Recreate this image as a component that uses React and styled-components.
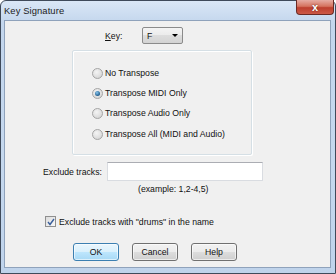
import React, {useState} from "react";
import styled, {createGlobalStyle} from "styled-components";

const GlobalStyle = createGlobalStyle`
  html, body {
    margin: 0;
    padding: 0;
    background: #ffffff;
  }
  body {
    font-family: "Liberation Sans", Arial, sans-serif;
  }
`;

const Frame = styled.div`
  width: 336px;
  height: 274px;
  box-sizing: border-box;
  border: 1px solid #3f4a5a;
  border-radius: 6px 6px 0 0;
  background: linear-gradient(#dae7f6, #c3d6ed 22px, #c5d8ee 60%, #bfd3eb);
  display: flex;
  flex-direction: column;
  padding: 0 4px 5px 3px;
`;
const TitleBar = styled.div`
  height: 19px;
  display: flex;
  align-items: center;
  justify-content: space-between;
`;
const Title = styled.div`
  font-size: 9.4px;
  color: #1b1b1b;
  letter-spacing: 0.1px;
`;
const CloseButton = styled.div`
  align-self: flex-start;
  width: 38px;
  height: 15px;
  margin: -1px -3px 0 0;
  box-sizing: border-box;
  border: 1px solid #6b2a24;
  border-top: none;
  border-radius: 0 0 4px 4px;
  background: linear-gradient(#e6aca3, #d5735f 45%, #bd3f2e 55%, #cc5a48);
  color: white;
  font-weight: bold;
  font-size: 11px;
  line-height: 1;
  display: flex;
  align-items: center;
  justify-content: center;
  text-shadow: 0 0 2px #5a1f1a;
`;
const Client = styled.div`
  flex: 1;
  background: #f0f0f0;
  border: 1px solid #8fa2bb;
  display: flex;
  flex-direction: column;
  font-size: 8.7px;
  color: #111;
`;
const KeyRow = styled.div`
  margin-top: 6px;
  padding-left: 100px;
  height: 17px;
  display: flex;
  align-items: center;
`;
const KeyLabel = styled.div`
  width: 37px;
  & u { text-decoration: underline; }
`;
const Select = styled.div`
  width: 41px;
  height: 17px;
  box-sizing: border-box;
  border: 1px solid #8b8b8b;
  border-radius: 2px;
  background: linear-gradient(#f4f4f4, #ebebeb 50%, #dddddd 50%, #d3d3d3);
  display: flex;
  align-items: center;
  justify-content: space-between;
  padding: 0 4px 0 4px;
`;
const Arrow = styled.div`
  width: 0;
  height: 0;
  border-left: 3px solid transparent;
  border-right: 3px solid transparent;
  border-top: 3px solid #000;
`;
const GroupBox = styled.div`
  margin: 6px 0 0 67px;
  width: 180px;
  height: 105px;
  box-sizing: border-box;
  border: 1px solid #d5dfe5;
  box-shadow: inset 1px 1px 0 #ffffff, 1px 1px 0 #ffffff;
  border-radius: 2px;
  padding: 12px 0 0 19px;
  display: flex;
  flex-direction: column;
`;
const RadioRow = styled.div`
  height: 20px;
  display: flex;
  align-items: center;
  gap: 2px;
  margin-top: ${p => p.$extra ? 1 : 0}px;
`;
const RadioCircle = styled.div`
  width: 11px;
  height: 11px;
  box-sizing: border-box;
  border-radius: 50%;
  border: 1px solid #a5a5a5;
  background: radial-gradient(circle at 40% 35%, #f4f4f4, #dedede 60%, #c8c8c8);
  display: flex;
  align-items: center;
  justify-content: center;
  &::after {
    content: "";
    width: 5px;
    height: 5px;
    border-radius: 50%;
    background: ${p => p.$checked ? "radial-gradient(circle at 40% 35%, #8ac6ef, #1f5d8c 70%)" : "transparent"};
  }
`;
const ExcludeRow = styled.div`
  margin-top: 7px;
  padding-left: 38px;
  height: 19px;
  display: flex;
  align-items: center;
`;
const ExcludeLabel = styled.div`
  width: 64px;
`;
const TextInput = styled.div`
  width: 156px;
  height: 19px;
  box-sizing: border-box;
  background: #ffffff;
  border: 1px solid #d9dce1;
  border-top-color: #abadb3;
`;
const Hint = styled.div`
  margin-top: 2px;
  padding-left: 133px;
  line-height: 12px;
`;
const CheckRow = styled.div`
  margin-top: 20px;
  padding-left: 40px;
  height: 13px;
  display: flex;
  align-items: center;
  gap: 3px;
`;
const CheckBox = styled.div`
  width: 11px;
  height: 11px;
  box-sizing: border-box;
  border: 1px solid #8f8f8f;
  background: linear-gradient(135deg, #dcdcdc, #f7f7f7);
  display: flex;
  align-items: center;
  justify-content: center;
`;
const ButtonRow = styled.div`
  margin-top: 15px;
  padding-left: 68px;
  display: flex;
  gap: 13px;
`;
const Button = styled.div`
  width: 46px;
  height: 18px;
  box-sizing: border-box;
  border: 1px solid ${p => p.$default ? "#3c7fb1" : "#707070"};
  border-radius: 3px;
  background: ${p => p.$default
    ? "linear-gradient(#eaf6fd, #d9f0fc 50%, #bee6fd 50%, #a7d9f5)"
    : "linear-gradient(#f2f2f2, #ebebeb 50%, #dddddd 50%, #cfcfcf)"};
  box-shadow: inset 0 0 0 1px rgba(255,255,255,0.6);
  display: flex;
  align-items: center;
  justify-content: center;
`;

const options = [
  "No Transpose",
  "Transpose MIDI Only",
  "Transpose Audio Only",
  "Transpose All (MIDI and Audio)",
];

export default function App() {
  const [mode, setMode] = useState(1);
  const [drums, setDrums] = useState(true);
  return (
    <>
      <GlobalStyle />
      <Frame>
        <TitleBar>
          <Title>Key Signature</Title>
          <CloseButton>x</CloseButton>
        </TitleBar>
        <Client>
          <KeyRow>
            <KeyLabel><u>K</u>ey:</KeyLabel>
            <Select>
              <span>F</span>
              <Arrow />
            </Select>
          </KeyRow>
          <GroupBox>
            {options.map((o, i) => (
              <RadioRow key={o} $extra={i === 3} onClick={() => setMode(i)}>
                <RadioCircle $checked={mode === i} />
                <span>{o}</span>
              </RadioRow>
            ))}
          </GroupBox>
          <ExcludeRow>
            <ExcludeLabel>Exclude tracks:</ExcludeLabel>
            <TextInput />
          </ExcludeRow>
          <Hint>(example: 1,2-4,5)</Hint>
          <CheckRow onClick={() => setDrums(!drums)}>
            <CheckBox>
              {drums && (
                <svg width="8" height="8" viewBox="0 0 8 8">
                  <path d="M1 4 L3 6.5 L7 1" fill="none" stroke="#3a5f9c" strokeWidth="1.4" />
                </svg>
              )}
            </CheckBox>
            <span>Exclude tracks with "drums" in the name</span>
          </CheckRow>
          <ButtonRow>
            <Button $default>OK</Button>
            <Button>Cancel</Button>
            <Button>Help</Button>
          </ButtonRow>
        </Client>
      </Frame>
    </>
  );
}
